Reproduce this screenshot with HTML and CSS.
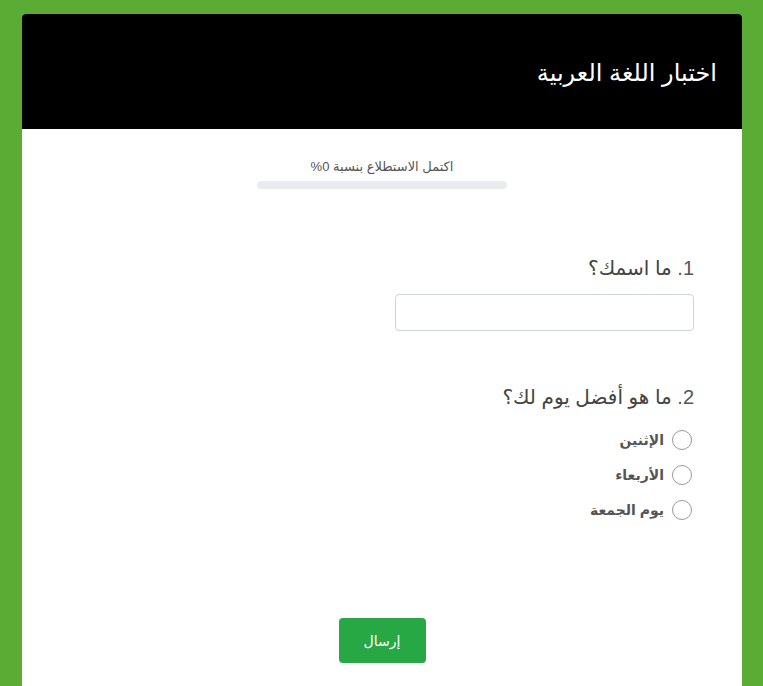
FILE: index.html
```html
<!DOCTYPE html>
<html lang="ar" dir="rtl">
<head>
<meta charset="utf-8">
<title>اختبار اللغة العربية</title>
<link rel="stylesheet" href="styles.css">
</head>
<body>
<div class="card">
  <header class="card-header">
    <h1 class="title">اختبار اللغة العربية</h1>
  </header>
  <main class="card-body">
    <div class="progress-wrap">
      <div class="progress-label">اكتمل الاستطلاع بنسبة 0%</div>
      <div class="progress-bar"><div class="progress-fill"></div></div>
    </div>
    <form class="form">
      <div class="question q1">
        <div class="q-title"><span class="q-num">1.</span> ما اسمك؟</div>
        <input class="text-input" type="text">
      </div>
      <div class="question q2">
        <div class="q-title"><span class="q-num">2.</span> ما هو أفضل يوم لك؟</div>
        <div class="options">
          <label class="option"><span class="radio"></span><span class="opt-text">الإثنين</span></label>
          <label class="option"><span class="radio"></span><span class="opt-text">الأربعاء</span></label>
          <label class="option"><span class="radio"></span><span class="opt-text">يوم الجمعة</span></label>
        </div>
      </div>
      <div class="actions">
        <button type="button" class="submit">إرسال</button>
      </div>
    </form>
  </main>
</div>
</body>
</html>
```
FILE: styles.css
```css
* { box-sizing: border-box; }
html, body { margin: 0; padding: 0; }
body {
  background: #5aac35;
  font-family: "Liberation Sans", "DejaVu Sans", Arial, sans-serif;
  min-height: 686px;
}
.card {
  margin: 14px 21px 0 22px;
  width: 720px;
  background: #fff;
  border-radius: 4px 4px 0 0;
  overflow: hidden;
  min-height: 672px;
}
.card-header {
  background: #000;
  height: 115px;
  display: flex;
  align-items: center;
  padding: 0 25px;
}
.title {
  margin: 0;
  color: #fff;
  font-size: 24px;
  font-weight: normal;
  padding-top: 2px;
}
.card-body {
  padding: 30px 48px 0 48px;
}
.progress-wrap {
  display: flex;
  flex-direction: column;
  align-items: center;
}
.progress-label {
  font-size: 13px;
  color: #555;
  line-height: 16px;
}
.progress-bar {
  width: 250px;
  height: 8px;
  background: #e9ecef;
  border-radius: 4px;
  margin-top: 6px;
}
.form {
  margin-top: 67px;
}
.question { margin-bottom: 54px; }
.q-title {
  font-size: 20px;
  color: #444;
  line-height: 24px;
}
.q-num { color: #555; }
.text-input {
  display: block;
  margin-top: 14px;
  width: 299px;
  height: 37px;
  border: 1px solid #ced4da;
  border-radius: 4px;
  background: #fff;
}
.options {
  margin-top: 21px;
  display: flex;
  flex-direction: column;
  gap: 15px;
}
.option {
  display: flex;
  align-items: center;
  gap: 8px;
  font-size: 14px;
  font-weight: bold;
  color: #555;
}
.radio {
  width: 20px;
  height: 20px;
  border: 1px solid #999;
  border-radius: 50%;
  margin-right: 2px;
  flex: none;
}
.actions {
  display: flex;
  justify-content: center;
  margin-top: 98px;
  margin-right: -48px;
  margin-left: -48px;
}
.submit {
  width: 87px;
  height: 45px;
  background: #28a745;
  color: #fff;
  border: none;
  border-radius: 4px;
  font-family: inherit;
  font-size: 14px;
}
```
